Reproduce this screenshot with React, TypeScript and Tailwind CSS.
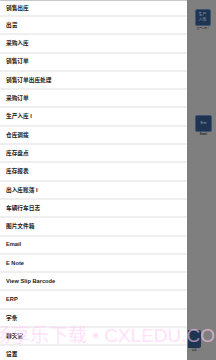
const menuItems = [
  '销售出库',
  '出货',
  '采购入库',
  '销售订单',
  '销售订单出库处理',
  '采购订单',
  '生产入库 I',
  '仓库调拨',
  '库存盘点',
  '库存报表',
  '出入库账簿 I',
  '车辆行车日志',
  '图片文件箱',
  'Email',
  'E Note',
  'View Slip Barcode',
  'ERP',
  '字条',
  '聊天室',
  '设置',
];

const font = { fontFamily: '"Liberation Sans", "Noto Sans CJK SC", sans-serif' };

export default function App() {
  return (
    <div className="relative flex h-[360px] w-[216px] overflow-hidden" style={font}>
      {/* Drawer */}
      <div className="flex w-[187px] shrink-0 flex-col bg-white">
        <div className="h-px shrink-0 bg-[#c8c8c8]" />
        {menuItems.map((item, i) => (
          <div
            key={item}
            className={`flex shrink-0 items-center border-b-2 border-[#efefef] pl-[6px] text-[5.7px] font-bold text-[#222] ${
              i === 0 ? 'h-[16px]' : 'h-[18.3px]'
            }`}
          >
            {item}
          </div>
        ))}
      </div>

      {/* Dimmed home screen */}
      <div className="flex flex-1 flex-col bg-[#7f7f7f]">
        <div className="ml-[7px] mt-[9px] flex w-[17px] flex-col items-center">
          <div className="flex h-[17px] w-[16px] flex-col items-center justify-center rounded-[2px] border border-[#3b5573] bg-[#1e3450] text-[4px] leading-[4.5px] text-[#8fa3bb]">
            <span>生产</span>
            <span>入库</span>
          </div>
          <span className="mt-[1px] whitespace-nowrap text-[2.6px] text-[#222]">生产入库 I</span>
        </div>

        <div className="ml-[8px] mt-[84px] flex w-[17px] flex-col items-center">
          <div className="flex h-[17px] w-[17px] items-center justify-center rounded-[2px] border border-[#3b5573] bg-[#1e3450] text-[4px] text-[#8fa3bb]">
            Em
          </div>
          <span className="mt-[1px] text-[2.6px] font-bold text-[#222]">Email</span>
        </div>

        <div className="mt-auto mb-[7px] flex w-[14px] flex-col items-center">
          <div className="h-[18px] w-[13px] rounded-r-[2px] bg-[#1e3450]" />
          <span className="mt-[1px] text-[2.6px] text-[#222]">设置</span>
        </div>
      </div>

      {/* Watermark */}
      <div className="pointer-events-none absolute left-[-8px] top-[324px] whitespace-nowrap text-[19px] leading-[23px] text-[rgba(255,205,245,0.6)]">
        畅享乐下载 • CXLEDU.COM
      </div>
    </div>
  );
}
